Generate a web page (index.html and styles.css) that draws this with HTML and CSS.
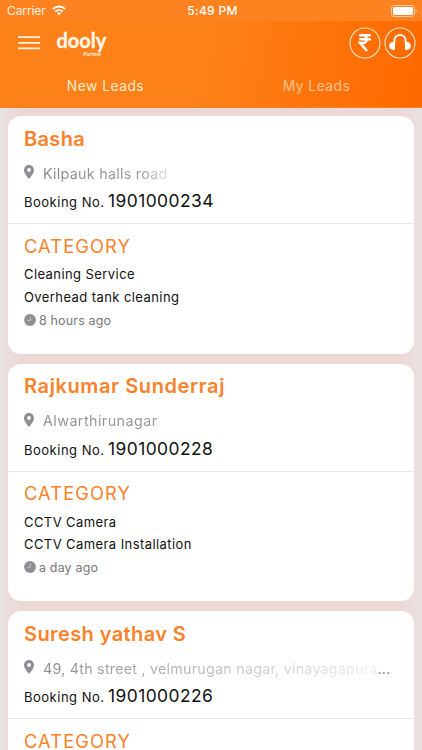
FILE: index.html
```html
<!DOCTYPE html>
<html lang="en">
<head>
<meta charset="utf-8">
<title>Dooly Partner</title>
<link rel="stylesheet" href="styles.css">
</head>
<body>
<svg width="0" height="0" class="defs">
  <symbol id="pin" viewBox="0 0 10 14"><path fill-rule="evenodd" d="M5 0C2.2 0 0 2.2 0 5c0 3.600 5 9 5 9s5-5.400 5-9c0-2.800-2.200-5-5-5zm0 3.100a1.900 1.900 0 1 1 0 3.800 1.900 1.900 0 0 1 0-3.800z"/></symbol>
  <symbol id="clock" viewBox="0 0 12 12"><circle cx="6" cy="6" r="5.900"/><path d="M6.300 2.800v3.600H3.200" fill="none" stroke="#d4d4d6" stroke-width=".8"/></symbol>
</svg>
<div class="screen">
  <header class="header">
    <div class="status">
      <div class="carrier"><span>Carrier</span>
        <svg class="wifi" viewBox="0 0 14 11"><g fill="none" stroke="#fff" stroke-width="1.900"><path d="M.8 4.100a8.800 8.800 0 0 1 12.400 0"/><path d="M3.200 6.700a5.400 5.400 0 0 1 7.600 0"/></g><path fill="#fff" d="M4.900 8.300a3 3 0 0 1 4.200 0L7 10.500z"/></svg>
      </div>
      <span class="time">5:49 PM</span>
      <svg class="battery" viewBox="0 0 26 12"><rect x=".5" y=".5" width="23" height="11" rx="2.700" fill="none" stroke="#fff" stroke-opacity=".55"/><rect x="2" y="2" width="20" height="8" rx="1.300" fill="#fff"/><path d="M24.700 4v4q1.100-.6 1.100-2t-1.100-2z" fill="#fff" fill-opacity=".55"/></svg>
    </div>
    <div class="bar">
      <svg class="menu" viewBox="0 0 22 14"><path d="M0 1.200h22M0 6.800h22M0 12.400h22" stroke="#fff3dc" stroke-width="1.800"/></svg>
      <div class="logo"><span class="brand">dooly</span><span class="sub">Partner</span></div>
      <svg class="round" viewBox="0 0 32 32"><circle cx="16" cy="16" r="15" fill="none" stroke="#ffe9c8" stroke-width="1.100"/><path d="M10.200 8.300h11.600M10.200 12.200h11.600M10.200 8.300h3.600c5.200 0 5.200 7.700 0 7.700h-2.600l6.800 8" fill="none" stroke="#fff" stroke-width="2.600"/></svg>
      <svg class="round" viewBox="0 0 32 32"><circle cx="16" cy="16" r="15" fill="none" stroke="#ffe9c8" stroke-width="1.100"/><path d="M10.300 17v-3c0-8 11.400-8 11.400 0v3" fill="none" stroke="#fff" stroke-width="2"/><path fill="#fff" d="M11 14.700v8.300H9.500q-4.300-.5-4.300-4.200t4.300-4.100zM21 14.700v8.300h1.500q4.300-.5 4.300-4.200t-4.300-4.100z"/></svg>
    </div>
    <nav class="tabs"><span class="tab active">New Leads</span><span class="tab">My Leads</span></nav>
  </header>
  <main class="list">
    <article class="card">
      <div class="top">
        <h2 class="name n1">Basha</h2>
        <div class="addr"><svg class="pin"><use href="#pin"/></svg><span class="place p1">Kilpauk halls road</span></div>
        <div class="booking"><span class="label">Booking No.</span><span class="num">1901000234</span></div>
      </div>
      <div class="bottom">
        <h3 class="cat">CATEGORY</h3>
        <p class="line">Cleaning Service</p>
        <p class="line">Overhead tank cleaning</p>
        <div class="ago"><svg class="clock"><use href="#clock"/></svg><span>8 hours ago</span></div>
      </div>
    </article>
    <article class="card">
      <div class="top">
        <h2 class="name n2">Rajkumar Sunderraj</h2>
        <div class="addr"><svg class="pin"><use href="#pin"/></svg><span class="place p2">Alwarthirunagar</span></div>
        <div class="booking"><span class="label">Booking No.</span><span class="num">1901000228</span></div>
      </div>
      <div class="bottom">
        <h3 class="cat">CATEGORY</h3>
        <p class="line">CCTV Camera</p>
        <p class="line">CCTV Camera Installation</p>
        <div class="ago"><svg class="clock"><use href="#clock"/></svg><span>a day ago</span></div>
      </div>
    </article>
    <article class="card">
      <div class="top">
        <h2 class="name n3">Suresh yathav S</h2>
        <div class="addr"><svg class="pin"><use href="#pin"/></svg><span class="place p3">49, 4th street , velmurugan nagar, vinayagapura</span><span class="dots">...</span></div>
        <div class="booking"><span class="label">Booking No.</span><span class="num">1901000226</span></div>
      </div>
      <div class="bottom">
        <h3 class="cat">CATEGORY</h3>
      </div>
    </article>
  </main>
</div>
</body>
</html>
```
FILE: styles.css
```css
* { box-sizing: border-box; margin: 0; padding: 0; }
body { font-family: Inter, sans-serif; }
.defs { display: block; }
.screen { width: 422px; height: 750px; overflow: hidden; background: linear-gradient(90deg, #e8e6e5 0, #ebdedc 8px, #ecd8d5 22px, #ecd8d5 400px, #ebdedc 414px, #e8e2e2 422px); }
.header { height: 108px; background: linear-gradient(100deg, #fd8119 48%, #ff6a00 96%); border-bottom: 1px solid #f08029; color: #fff; }
.status { height: 21px; display: grid; grid-template-columns: 1fr auto 1fr; align-items: center; padding: 0 6px 0 7px; background: #fd8220; font-size: 12px; }
.carrier { display: flex; align-items: center; gap: 6px; color: #fff3e2; letter-spacing: -0.1px; }
.wifi { width: 14px; height: 11px; }
.time { font-weight: 500; letter-spacing: 0.3px; padding-left: 2px; }
.battery { width: 26px; height: 12px; justify-self: end; margin-right: -1px; }
.bar { height: 44px; display: flex; align-items: center; padding: 0 6px 0 18px; }
.menu { width: 22px; height: 14px; margin-right: 16.5px; }
.logo { width: 51.5px; height: 29px; margin-right: auto; display: flex; flex-direction: column; color: #fff7ea; }
.brand { font-family: Lato, sans-serif; font-weight: 700; font-size: 20px; line-height: 22px; height: 22px; -webkit-text-stroke: 0.3px #fff7ea; letter-spacing: 0; }
.sub { font-size: 5px; line-height: 7px; font-weight: 600; padding-left: 27px; }
.round { width: 32px; height: 32px; margin-left: 3px; }
.tabs { display: grid; grid-template-columns: 1fr 1fr; text-align: center; font-size: 13.8px; line-height: 42px; letter-spacing: 0.5px; }
.tab { color: #ffc48e; }
.tab.active { color: #ffebcd; }
.list { display: flex; flex-direction: column; gap: 10px; padding: 8px 8px 0; }
.card { height: 237.5px; flex: none; background: #fff; border-radius: 13px; overflow: hidden; }
.top { height: 108px; padding: 10.500px 16px 0; border-bottom: 1px solid #e6e6e6; }
.name { font-size: 20px; line-height: 24px; font-weight: 600; color: #f9822b; white-space: nowrap; }
.n1 { letter-spacing: 0.35px; }
.n2 { letter-spacing: 0.6px; }
.n3 { letter-spacing: 0.4px; }
.addr { margin-top: 13px; height: 20px; line-height: 20px; display: flex; font-size: 14.300px; white-space: nowrap; color: #8e8e93; }
.pin { width: 10px; height: 14px; margin: 1.500px 9px 0 0; fill: #8e8e93; }
.place { letter-spacing: 0.27px; color: transparent; background-clip: text; -webkit-background-clip: text; }
.p1 { background-image: linear-gradient(90deg, #88888c, #9c9ca0 80%, #dedee0); }
.p2 { letter-spacing: 0.45px; background-image: linear-gradient(90deg, #8e8e93, #98989c); }
.p3 { letter-spacing: 0.23px; background-image: linear-gradient(90deg, #8e8e93, #eeeeee); }
.dots { color: #77777b; }
.booking { margin-top: 5.5px; height: 24px; line-height: 24px; display: flex; align-items: baseline; color: #111; white-space: nowrap; }
.label { width: 84px; font-size: 13px; letter-spacing: 0.5px; }
.num { font-size: 17.4px; letter-spacing: 0.45px; }
.bottom { padding: 10.7px 16px 0; }
.cat { font-size: 18.3px; line-height: 22px; font-weight: 400; color: #f9822b; letter-spacing: 1.1px; margin-bottom: 6.8px; }
.line { font-size: 13px; line-height: 22.500px; color: #111; letter-spacing: 0.42px; }
.ago { display: flex; margin-top: 2.5px; font-size: 12.500px; line-height: 20px; color: #77777b; letter-spacing: 0.15px; }
.clock { width: 12px; height: 12px; margin: 3px 3px 0 0; fill: #8e8e93; }
```
